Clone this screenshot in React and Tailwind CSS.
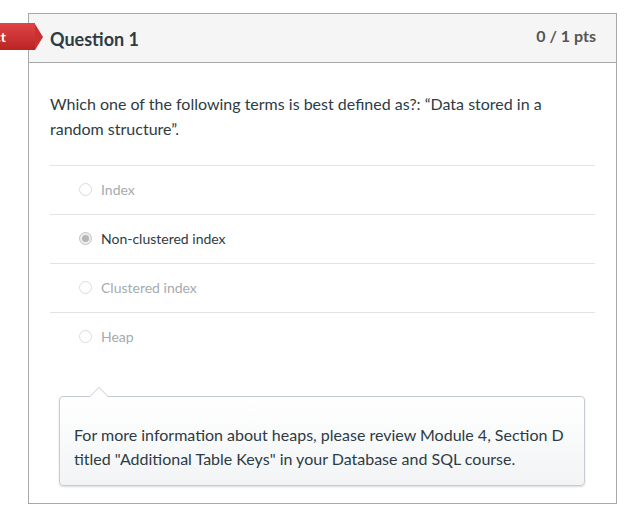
const answers = [
  { label: 'Index', selected: false },
  { label: 'Non-clustered index', selected: true },
  { label: 'Clustered index', selected: false },
  { label: 'Heap', selected: false },
];

export default function App() {
  return (
    <div className="min-h-screen bg-white pl-[28px] pt-[13px] font-['Lato','Liberation_Sans',sans-serif] text-[#2d3b45]">
      <div className="relative w-[589px] border border-[#a8a8a8]">
        {/* Incorrect tag, mostly off the left edge */}
        <div className="absolute left-[-29px] top-[9px] flex h-[27px] items-center">
          <div className="flex h-full w-[35px] items-center justify-end overflow-hidden bg-gradient-to-b from-[#e04545] to-[#b82323] pr-[29px] text-[14px] font-bold text-white">
            <span className="whitespace-nowrap">Incorrect</span>
          </div>
          <div className="h-0 w-0 border-y-[13.5px] border-l-[8px] border-y-transparent border-l-[#c93030]" />
        </div>

        {/* Header */}
        <div className="flex h-[49px] items-center justify-between border-b border-[#a8a8a8] bg-[#f5f5f5] pl-[21px] pr-[20px]">
          <h2 className="pt-[2px] text-[18px] font-bold">Question 1</h2>
          <div className="pb-[5px] text-[16px] font-bold text-[#555]">0 / 1 pts</div>
        </div>

        {/* Body */}
        <div className="px-[21px] pb-[17px] pt-[28px]">
          <p className="mb-[24px] text-[16px] leading-[25px]">
            Which one of the following terms is best defined as?: “Data stored in a random structure”.
          </p>
          <div>
            {answers.map((a) => (
              <div
                key={a.label}
                className={`flex h-[49px] items-center gap-[9px] pb-[2px] pl-[29px] text-[14px] border-t border-[#e3e3e3] ${
                  a.selected ? 'text-[#2d3b45]' : 'text-[#a5abb0]'
                }`}
              >
                <span
                  className={`flex h-[13px] w-[13px] items-center justify-center rounded-full border ${
                    a.selected ? 'border-[#c4c4c4] bg-[#ececec]' : 'border-[#dcdcdc] bg-white'
                  }`}
                >
                  {a.selected && <span className="h-[7px] w-[7px] rounded-full bg-[#b5b5b5]" />}
                </span>
                <span>{a.label}</span>
              </div>
            ))}
          </div>

          {/* Comment */}
          <div className="relative ml-[9px] mt-[35px] w-[526px] rounded-[4px] border border-[#c6ccd1] bg-gradient-to-b from-white to-[#f2f4f5] pb-[14px] pl-[14px] pr-[10px] pt-[26px] text-[16px] leading-[24px] shadow-[0_1px_2px_rgba(0,0,0,0.15)]">
            <div className="absolute left-[29px] top-[-10px] h-0 w-0 border-x-[10px] border-b-[10px] border-x-transparent border-b-[#c6ccd1]" />
            <div className="absolute left-[30px] top-[-9px] h-0 w-0 border-x-[9px] border-b-[9px] border-x-transparent border-b-white" />
            For more information about heaps, please review Module 4, Section D titled "Additional Table Keys" in your Database and SQL course.
          </div>
        </div>
      </div>
    </div>
  );
}
